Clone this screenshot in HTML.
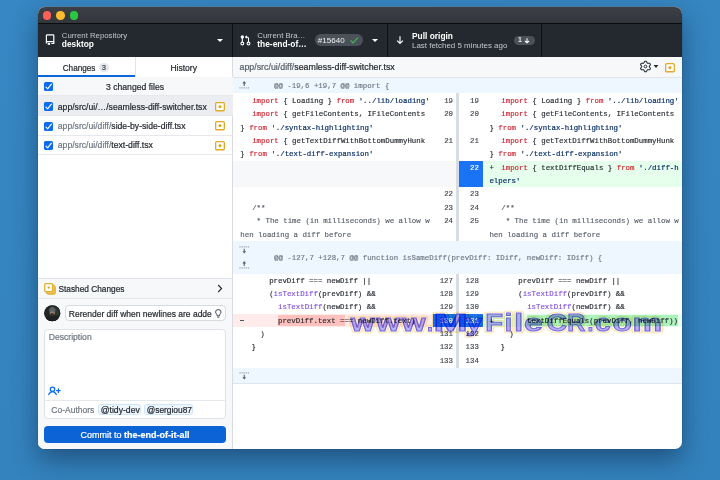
<!DOCTYPE html>
<html><head><meta charset="utf-8">
<style>
*{box-sizing:border-box;margin:0;padding:0}
html,body{width:720px;height:480px;overflow:hidden}
.win,.page{will-change:transform}
body{position:relative;background:linear-gradient(170deg,#3687c3 0%,#3584bf 55%,#3382bd 100%);font-family:"Liberation Sans",sans-serif}
.win{position:absolute;left:38px;top:7px;width:644px;height:442px;border-radius:7px;overflow:hidden;background:#fff;box-shadow:0 11px 26px rgba(10,30,60,.47),0 0 0 0.5px rgba(0,0,0,.15),0 -0.8px 0 rgba(150,158,168,.55)}
.a{position:absolute}
.title{position:absolute;left:0;top:0;width:644px;height:17px;background:linear-gradient(#3c3f45,#33363b);border-bottom:1px solid #0b0c0e}
.tl{position:absolute;top:4.1px;width:8.6px;height:8.6px;border-radius:50%}
.toolbar{position:absolute;left:0;top:17px;width:644px;height:33px;background:#24292f}
.div{position:absolute;top:17px;width:1px;height:33px;background:#0d0f12}
.t1{position:absolute;color:#c3c7cc;font-size:7.8px;white-space:nowrap}
.t2{position:absolute;color:#fff;font-weight:bold;font-size:8.4px;white-space:nowrap}
.caret{position:absolute;width:0;height:0;border-left:3px solid transparent;border-right:3px solid transparent;border-top:3.2px solid #fff}
.s{font-family:"Liberation Sans",sans-serif;white-space:nowrap;position:absolute;color:#24292f;-webkit-text-stroke:0.2px currentColor}
.ln{position:absolute;font-family:"Liberation Mono",monospace;font-size:7.4px;line-height:13.38px;white-space:pre;color:#24292f;padding-top:1.8px;-webkit-text-stroke:0.15px currentColor}
.num{position:absolute;width:40px;text-align:right;font-family:"Liberation Mono",monospace;font-size:7.4px;line-height:13.38px;color:#3f464e;padding-top:1.8px;-webkit-text-stroke:0.15px currentColor}
.num.w{color:#fff}
.bg{position:absolute}
.k{color:#cf222e}.f{color:#8250df}.c{color:#57606a}
.ln .s{position:static;font-family:inherit;color:#0a3069}
.ic{position:absolute;overflow:visible}
.frow{position:absolute;left:0;width:195px;border-bottom:1px solid #e6e8eb}
</style></head><body>
<div class="win">
  <div class="title">
    <div class="tl" style="left:4.9px;background:#fe5f57"></div>
    <div class="tl" style="left:18.3px;background:#febc2e"></div>
    <div class="tl" style="left:31.8px;background:#28c840"></div>
  </div>
  <div class="a" style="left:0;top:0;width:644px;height:442px">
  <div class="toolbar"></div>
  <div class="div" style="left:194.3px"></div>
  <div class="div" style="left:349px"></div>
  <div class="div" style="left:503.3px"></div>
  <!-- repo -->
  <svg class="ic" style="left:6px;top:26px" width="12" height="13" viewBox="0 0 12 13"><path d="M2.4 10.5V2.6Q2.4 1.8 3.2 1.8H9Q9.8 1.8 9.8 2.6V10.5H7.4 M2.4 8.7H9.8" stroke="#fff" stroke-width="1.2" fill="none"/><rect x="3.7" y="9.9" width="2.4" height="1.9" fill="#fff"/></svg>
  <div class="t1" style="left:23.8px;top:23.7px">Current Repository</div>
  <div class="t2" style="left:23.8px;top:32.1px">desktop</div>
  <div class="caret" style="left:179px;top:31.5px"></div>
  <!-- branch -->
  <svg class="ic" style="left:201px;top:27px" width="12" height="12" viewBox="0 0 12 12"><g stroke="#fff" stroke-width="1.1" fill="none"><circle cx="3.3" cy="9.5" r="1.4"/><circle cx="9.5" cy="9.5" r="1.4"/><circle cx="3.3" cy="3" r="1.1" fill="#fff"/><path d="M3.3 4V8.1 M9.5 8.1V4.6Q9.5 3 7.9 3H6.6 M7.8 1.8L6.6 3L7.8 4.2"/></g></svg>
  <div class="t1" style="left:219.3px;top:23.7px">Current Bra…</div>
  <div class="t2" style="left:219.3px;top:31.700000000000003px">the-end-of…</div>
  <div class="a" style="left:276.9px;top:26.75px;width:47.9px;height:12.25px;border-radius:6.1px;background:#4a5159"></div>
  <div class="t1" style="left:279.8px;top:28.6px;color:#eef0f2;font-size:8.06px">#15640</div>
  <svg class="ic" style="left:311.5px;top:30px" width="9" height="7" viewBox="0 0 9 7"><path d="M0.6 3.4L3 5.9L8 0.6" stroke="#3fb950" stroke-width="1.2" fill="none"/></svg>
  <div class="caret" style="left:334px;top:31.5px"></div>
  <!-- pull -->
  <svg class="ic" style="left:357.5px;top:29.2px" width="8" height="9" viewBox="0 0 8 9"><path d="M4 0.3V7.4 M1.1 4.6L4 7.5L6.9 4.6" stroke="#fff" stroke-width="1.15" fill="none"/></svg>
  <div class="t2" style="left:374px;top:24.3px">Pull origin</div>
  <div class="t1" style="left:374px;top:34.4px;font-size:7.95px">Last fetched 5 minutes ago</div>
  <div class="a" style="left:476.2px;top:28.8px;width:20.5px;height:8.9px;border-radius:4.45px;background:#4a5159"></div>
  <div class="t1" style="left:480px;top:29.3px;color:#e6e8ea;font-size:7px;font-weight:bold">1</div>
  <svg class="ic" style="left:486px;top:30.8px" width="6" height="7" viewBox="0 0 6 7"><path d="M3 0.3V4.7 M1 3L3 4.9L5 3" stroke="#fff" stroke-width="1.05" fill="none"/></svg>

  <!-- sidebar -->
  <div class="a" style="left:0;top:50px;width:195px;height:392px;background:#fff;border-right:1px solid #d8dce0"></div>
  <div class="a" style="left:96.5px;top:50px;width:1px;height:20px;background:#e1e4e8"></div>
  <div class="a" style="left:0;top:70px;width:194px;height:1px;background:#e1e4e8"></div>
  <div class="a" style="left:0;top:68px;width:97px;height:2px;background:#0b66d8"></div>
  <div class="s" style="left:24.7px;top:57.1px;font-size:8.2px">Changes</div>
  <div class="a" style="left:61.3px;top:56.3px;width:10px;height:8.5px;border-radius:4.25px;background:#e5e8eb"></div>
  <div class="s" style="left:64px;top:57.2px;font-size:7px;color:#3c434b">3</div>
  <div class="s" style="left:132.4px;top:55.8px;font-size:8.55px">History</div>
  <div class="frow" style="top:70px;height:19px;background:#f6f8fa"></div>
  <div class="frow" style="top:89px;height:20px;background:#ebedf0"></div>
  <div class="frow" style="top:109px;height:19.5px"></div>
  <div class="frow" style="top:128.5px;height:19.5px"></div>
  <svg class="ic" style="left:6px;top:75.2px" width="9" height="9" viewBox="0 0 9 9"><rect x="0" y="0" width="9" height="9" rx="1.6" fill="#0b6cf2"/><path d="M2 5.2L3.6 6.8L7.4 2.2" stroke="#fff" stroke-width="1.15" fill="none" stroke-linecap="round" stroke-linejoin="round"/></svg><svg class="ic" style="left:6px;top:95px" width="9" height="9" viewBox="0 0 9 9"><rect x="0" y="0" width="9" height="9" rx="1.6" fill="#0b6cf2"/><path d="M2 5.2L3.6 6.8L7.4 2.2" stroke="#fff" stroke-width="1.15" fill="none" stroke-linecap="round" stroke-linejoin="round"/></svg><svg class="ic" style="left:6px;top:114.7px" width="9" height="9" viewBox="0 0 9 9"><rect x="0" y="0" width="9" height="9" rx="1.6" fill="#0b6cf2"/><path d="M2 5.2L3.6 6.8L7.4 2.2" stroke="#fff" stroke-width="1.15" fill="none" stroke-linecap="round" stroke-linejoin="round"/></svg><svg class="ic" style="left:6px;top:134.1px" width="9" height="9" viewBox="0 0 9 9"><rect x="0" y="0" width="9" height="9" rx="1.6" fill="#0b6cf2"/><path d="M2 5.2L3.6 6.8L7.4 2.2" stroke="#fff" stroke-width="1.15" fill="none" stroke-linecap="round" stroke-linejoin="round"/></svg>
  <div class="s" style="left:68px;top:75.1px;font-size:8.65px">3 changed files</div>
  <div class="s" style="left:19.8px;top:95.0px;font-size:8.63px;color:#24292f">app/src/ui/…/seamless-diff-switcher.tsx</div>
  <div class="s" style="left:19.8px;top:114.3px;font-size:8.63px;color:#24292f"><span style="color:#6e7781">app/src/ui/diff/</span>side-by-side-diff.tsx</div>
  <div class="s" style="left:19.8px;top:132.5px;font-size:8.63px;color:#24292f"><span style="color:#6e7781">app/src/ui/diff/</span>text-diff.tsx</div>
  <svg class="ic" style="left:177px;top:95.0px" width="10" height="9.4" viewBox="0 0 10 9.4"><rect x="0.65" y="0.65" width="8.7" height="8.1" rx="1.1" fill="#fff" stroke="#e0ab28" stroke-width="1.3"/><circle cx="5" cy="4.7" r="1.45" fill="#dca20e"/></svg><svg class="ic" style="left:177px;top:114.3px" width="10" height="9.4" viewBox="0 0 10 9.4"><rect x="0.65" y="0.65" width="8.7" height="8.1" rx="1.1" fill="#fff" stroke="#e0ab28" stroke-width="1.3"/><circle cx="5" cy="4.7" r="1.45" fill="#dca20e"/></svg><svg class="ic" style="left:177px;top:133.7px" width="10" height="9.4" viewBox="0 0 10 9.4"><rect x="0.65" y="0.65" width="8.7" height="8.1" rx="1.1" fill="#fff" stroke="#e0ab28" stroke-width="1.3"/><circle cx="5" cy="4.7" r="1.45" fill="#dca20e"/></svg>

  <!-- stash + commit -->
  <div class="a" style="left:0;top:270.9px;width:195px;height:171.1px;background:#f6f8fa;border-top:1px solid #e1e4e8;border-right:1px solid #d8dce0"></div>
  <div class="a" style="left:0;top:291px;width:194px;height:1px;background:#e6e8eb"></div>
  <svg class="ic" style="left:5.8px;top:275.5px" width="12" height="12" viewBox="0 0 12 12"><rect x="3" y="3" width="8.3" height="8.2" rx="1.2" fill="#efcf70" stroke="#e0ad2a" stroke-width="1"/><rect x="1.9" y="1.9" width="8.3" height="8.2" rx="1.2" fill="#f3dc92" stroke="#e0ad2a" stroke-width="1"/><rect x="0.7" y="0.7" width="7.9" height="7.8" rx="1.1" fill="#fff" stroke="#e0ad2a" stroke-width="1.25"/><circle cx="4.65" cy="4.6" r="1.15" fill="#d9a21c"/></svg>
  <div class="s" style="left:20.5px;top:277.0px;font-size:8.3px">Stashed Changes</div>
  <svg class="ic" style="left:179px;top:277px" width="6" height="9" viewBox="0 0 6 9"><path d="M1.2 1L4.6 4.5L1.2 8" stroke="#24292f" stroke-width="1.1" fill="none"/></svg>
  <svg class="ic" style="left:6.3px;top:298px" width="16.5" height="16.5" viewBox="0 0 16.5 16.5"><defs><clipPath id="av"><circle cx="8.25" cy="8.25" r="8.1"/></clipPath></defs><g clip-path="url(#av)"><rect width="16.5" height="16.5" fill="#222824"/><rect x="11" y="0" width="5.5" height="10" fill="#2c352e"/><ellipse cx="8.5" cy="16" rx="7.5" ry="5.5" fill="#1f2124"/><ellipse cx="8.3" cy="8.2" rx="2.6" ry="2.4" fill="#9a7f70"/><ellipse cx="8.3" cy="9.6" rx="2.2" ry="1.5" fill="#3a302c"/><path d="M4.9 6.6Q4.9 2 8.3 2Q11.7 2 11.7 6.6Z" fill="#5d6268"/><circle cx="8.25" cy="8.25" r="7.9" fill="none" stroke="#111" stroke-width=".6"/></g></svg>
  <div class="a" style="left:26.7px;top:298.3px;width:161px;height:16px;border-radius:4px;background:#fff;border:1px solid #d6dbe0"></div>
  <div class="s" style="left:30.8px;top:302.0px;font-size:8.5px">Rerender diff when newlines are adde</div>
  <svg class="ic" style="left:176.5px;top:302px" width="7" height="10" viewBox="0 0 7 10"><path d="M2.1 6.8Q2.1 5.6 1.3 4.7Q0.6 3.9 0.6 2.9Q0.6 0.6 3.3 0.6Q6 0.6 6 2.9Q6 3.9 5.3 4.7Q4.5 5.6 4.5 6.8Z M2.3 8.2H4.3" stroke="#3c434b" stroke-width="1" fill="none"/></svg>
  <div class="a" style="left:6.4px;top:322.1px;width:181.3px;height:90.4px;border-radius:4px;background:#fff;border:1px solid #dfe3e7"></div>
  <div class="a" style="left:7px;top:392.5px;width:180px;height:1px;background:#e6e9ec"></div>
  <div class="s" style="left:10.7px;top:325.4px;font-size:8.6px;color:#6e7781">Description</div>
  <svg class="ic" style="left:9px;top:379px" width="14" height="10" viewBox="0 0 14 10"><g stroke="#0b6cf2" stroke-width="1.25" fill="none" stroke-linecap="round"><circle cx="5.5" cy="3.2" r="2.2"/><path d="M1.7 8.6Q3 5.6 5.5 5.6Q8 5.6 9.3 8.6 M9.6 4.6H13.2 M11.4 2.8V6.4"/></g></svg>
  <div class="s" style="left:13.3px;top:397.5px;font-size:8.5px;color:#6e7781">Co-Authors</div>
  <div class="a" style="left:60.4px;top:397.3px;width:42.9px;height:11.1px;border-radius:3px;background:#eef7ff;border:1px solid #cfe4f7"></div>
  <div class="s" style="left:62.7px;top:397.5px;font-size:8.68px">@tidy-dev</div>
  <div class="a" style="left:106.4px;top:397.3px;width:48.9px;height:11.1px;border-radius:3px;background:#eef7ff;border:1px solid #cfe4f7"></div>
  <div class="s" style="left:108.7px;top:397.5px;font-size:8.38px">@sergiou87</div>
  <div class="a" style="left:6.2px;top:419.1px;width:181.5px;height:16.7px;border-radius:4px;background:#0b63d6"></div>
  <div class="s" style="left:42.6px;top:422.6px;font-size:8.99px;color:#fff">Commit to <b>the-end-of-it-all</b></div>

  <!-- diff area header -->
  <div class="a" style="left:195px;top:50px;width:449px;height:20.5px;background:#f6f8fa;border-bottom:1px solid #e1e4e8"></div>
  <div class="s" style="left:201.5px;top:55.3px;font-size:8.83px;color:#57606a">app/src/ui/diff/<span style="color:#24292f">seamless-diff-switcher.tsx</span></div>
  <svg class="ic" style="left:602.3px;top:54.4px" width="11" height="11" viewBox="0 0 11 11"><path d="M3.63 2.25 L4.76 0.20 L6.24 0.20 L7.38 2.25 L9.72 2.21 L10.46 3.50 L9.25 5.50 L10.46 7.50 L9.72 8.79 L7.38 8.75 L6.24 10.80 L4.76 10.80 L3.63 8.75 L1.28 8.79 L0.54 7.50 L1.75 5.50 L0.54 3.50 L1.28 2.21Z" stroke="#24292f" stroke-width="1.05" stroke-linejoin="round" fill="none"/><circle cx="5.5" cy="5.5" r="1.35" stroke="#24292f" stroke-width="1" fill="none"/></svg>
  <div class="caret" style="left:615.6px;top:58.3px;border-left-width:2.7px;border-right-width:2.7px;border-top:3.3px solid #24292f;transform:scaleX(1.2)"></div>
  <svg class="ic" style="left:627.3px;top:55.9px" width="10" height="9.4" viewBox="0 0 10 9.4"><rect x="0.65" y="0.65" width="8.7" height="8.1" rx="1.1" fill="#fff" stroke="#e0ab28" stroke-width="1.3"/><circle cx="5" cy="4.7" r="1.45" fill="#dca20e"/></svg>
</div></div>
<div class="a page" style="left:0;top:0;width:720px;height:480px">
  <div class="bg" style="left:233px;top:78px;width:449px;height:15.3px;background:#eef6ff"></div>
  <div class="bg" style="left:233px;top:241px;width:449px;height:32.8px;background:#eef6ff"></div>
  <div class="bg" style="left:233px;top:367.6px;width:449px;height:16.2px;background:#eef6ff;border-bottom:1px solid #dde6ef"></div>
  <div class="ln" style="left:274px;top:78.3px;color:#6e7781">@@ -19,6 +19,7 @@ import {</div>
  <div class="ln" style="left:274px;top:250.5px;color:#6e7781">@@ -127,7 +128,7 @@ function isSameDiff(prevDiff: IDiff, newDiff: IDiff) {</div>
  <svg class="ic" style="left:239.0px;top:80px" width="11" height="10" viewBox="0 0 11 10"><path d="M3.4 3.4H7.1L5.25 1.1Z" fill="#57606a"/><path d="M5.25 2.6V6.1" stroke="#57606a" stroke-width="1.1"/><path d="M0.4 7.9H10.4" stroke="#8c959f" stroke-width="1" stroke-dasharray="1.25 0.85"/></svg><svg class="ic" style="left:239.0px;top:245px" width="11" height="10" viewBox="0 0 11 10"><path d="M0.4 1.9H10.4" stroke="#8c959f" stroke-width="1" stroke-dasharray="1.25 0.85"/><path d="M5.25 3.7V7" stroke="#57606a" stroke-width="1.1"/><path d="M3.4 6.2H7.1L5.25 8.6Z" fill="#57606a"/></svg><svg class="ic" style="left:239.0px;top:260.1px" width="11" height="10" viewBox="0 0 11 10"><path d="M3.4 3.4H7.1L5.25 1.1Z" fill="#57606a"/><path d="M5.25 2.6V6.1" stroke="#57606a" stroke-width="1.1"/><path d="M0.4 7.9H10.4" stroke="#8c959f" stroke-width="1" stroke-dasharray="1.25 0.85"/></svg><svg class="ic" style="left:239.0px;top:371.3px" width="11" height="10" viewBox="0 0 11 10"><path d="M0.4 1.9H10.4" stroke="#8c959f" stroke-width="1" stroke-dasharray="1.25 0.85"/><path d="M5.25 3.7V7" stroke="#57606a" stroke-width="1.1"/><path d="M3.4 6.2H7.1L5.25 8.6Z" fill="#57606a"/></svg>
  <div class="ln" style="left:252.20px;top:93.00px"><span class="k">import</span> { Loading } <span class="k">from</span> <span class="s">&#x27;../lib/loading&#x27;</span></div>
<div class="ln" style="left:501.30px;top:93.00px"><span class="k">import</span> { Loading } <span class="k">from</span> <span class="s">&#x27;../lib/loading&#x27;</span></div>
<div class="num" style="left:413.00px;top:93.00px">19</div>
<div class="num" style="left:438.90px;top:93.00px">19</div>
<div class="ln" style="left:252.20px;top:106.38px"><span class="k">import</span> { getFileContents, IFileContents</div>
<div class="ln" style="left:501.30px;top:106.38px"><span class="k">import</span> { getFileContents, IFileContents</div>
<div class="ln" style="left:240.30px;top:119.76px">} <span class="k">from</span> <span class="s">&#x27;./syntax-highlighting&#x27;</span></div>
<div class="ln" style="left:489.40px;top:119.76px">} <span class="k">from</span> <span class="s">&#x27;./syntax-highlighting&#x27;</span></div>
<div class="num" style="left:413.00px;top:106.38px">20</div>
<div class="num" style="left:438.90px;top:106.38px">20</div>
<div class="ln" style="left:252.20px;top:133.14px"><span class="k">import</span> { getTextDiffWithBottomDummyHunk</div>
<div class="ln" style="left:501.30px;top:133.14px"><span class="k">import</span> { getTextDiffWithBottomDummyHunk</div>
<div class="ln" style="left:240.30px;top:146.52px">} <span class="k">from</span> <span class="s">&#x27;./text-diff-expansion&#x27;</span></div>
<div class="ln" style="left:489.40px;top:146.52px">} <span class="k">from</span> <span class="s">&#x27;./text-diff-expansion&#x27;</span></div>
<div class="num" style="left:413.00px;top:133.14px">21</div>
<div class="num" style="left:438.90px;top:133.14px">21</div>
<div class="bg" style="left:233.00px;top:160.70px;width:223.40px;height:26.76px;background:#f6f8fa"></div>
<div class="bg" style="left:458.00px;top:160.70px;width:24.80px;height:26.76px;background:#1a73f5"></div>
<div class="bg" style="left:482.70px;top:160.70px;width:199.30px;height:26.76px;background:#e6ffec"></div>
<div class="ln" style="left:489.40px;top:160.70px">+</div>
<div class="ln" style="left:501.30px;top:159.90px"><span class="k">import</span> { textDiffEquals } <span class="k">from</span> <span class="s">&#x27;./diff-h</span></div>
<div class="ln" style="left:489.40px;top:173.28px"><span class="s">elpers&#x27;</span></div>
<div class="num w" style="left:438.90px;top:159.90px">22</div>
<div class="ln" style="left:252.20px;top:186.66px"></div>
<div class="ln" style="left:501.30px;top:186.66px"></div>
<div class="num" style="left:413.00px;top:186.66px">22</div>
<div class="num" style="left:438.90px;top:186.66px">23</div>
<div class="ln" style="left:252.20px;top:200.04px"><span class="c">/**</span></div>
<div class="ln" style="left:501.30px;top:200.04px"><span class="c">/**</span></div>
<div class="num" style="left:413.00px;top:200.04px">23</div>
<div class="num" style="left:438.90px;top:200.04px">24</div>
<div class="ln" style="left:252.20px;top:213.42px"><span class="c"> * The time (in milliseconds) we allow w</span></div>
<div class="ln" style="left:501.30px;top:213.42px"><span class="c"> * The time (in milliseconds) we allow w</span></div>
<div class="ln" style="left:240.30px;top:226.80px"><span class="c">hen loading a diff before</span></div>
<div class="ln" style="left:489.40px;top:226.80px"><span class="c">hen loading a diff before</span></div>
<div class="num" style="left:413.00px;top:213.42px">24</div>
<div class="num" style="left:438.90px;top:213.42px">25</div>
<div class="ln" style="left:251.40px;top:272.80px">    prevDiff === newDiff ||</div>
<div class="ln" style="left:500.50px;top:272.80px">    prevDiff === newDiff ||</div>
<div class="num" style="left:413.00px;top:272.80px">127</div>
<div class="num" style="left:438.90px;top:272.80px">128</div>
<div class="ln" style="left:251.40px;top:286.18px">    (<span class="f">isTextDiff</span>(prevDiff) &amp;&amp;</div>
<div class="ln" style="left:500.50px;top:286.18px">    (<span class="f">isTextDiff</span>(prevDiff) &amp;&amp;</div>
<div class="num" style="left:413.00px;top:286.18px">128</div>
<div class="num" style="left:438.90px;top:286.18px">129</div>
<div class="ln" style="left:251.40px;top:299.56px">      <span class="f">isTextDiff</span>(newDiff) &amp;&amp;</div>
<div class="ln" style="left:500.50px;top:299.56px">      <span class="f">isTextDiff</span>(newDiff) &amp;&amp;</div>
<div class="num" style="left:413.00px;top:299.56px">129</div>
<div class="num" style="left:438.90px;top:299.56px">130</div>
<div class="bg" style="left:233.00px;top:313.94px;width:200.00px;height:13.38px;background:#ffebe9"></div>
<div class="bg" style="left:433.10px;top:313.94px;width:23.40px;height:13.38px;background:#1a73f5"></div>
<div class="bg" style="left:458.00px;top:313.94px;width:24.80px;height:13.38px;background:#1a73f5"></div>
<div class="bg" style="left:482.70px;top:313.94px;width:199.30px;height:13.38px;background:#e6ffec"></div>
<div class="bg" style="left:240.30px;top:319.64px;width:3.80px;height:0.90px;background:#4a525b"></div>
<div class="ln" style="left:489.40px;top:313.94px">+</div>
<div class="bg" style="left:277.54px;top:315.14px;width:67.60px;height:10.98px;background:#ffc1bd"></div>
<div class="ln" style="left:251.40px;top:312.94px">      prevDiff.text === newDiff.text)</div>
<div class="bg" style="left:526.64px;top:315.14px;width:151.46px;height:10.98px;background:#abf2bc"></div>
<div class="ln" style="left:500.50px;top:312.94px">      textDiffEquals(prevDiff, newDiff))</div>
<div class="num w" style="left:413.00px;top:312.94px">130</div>
<div class="num w" style="left:438.90px;top:312.94px">131</div>
<div class="ln" style="left:251.40px;top:326.32px">  )</div>
<div class="ln" style="left:500.50px;top:326.32px">  )</div>
<div class="num" style="left:413.00px;top:326.32px">131</div>
<div class="num" style="left:438.90px;top:326.32px">132</div>
<div class="ln" style="left:251.40px;top:339.70px">}</div>
<div class="ln" style="left:500.50px;top:339.70px">}</div>
<div class="num" style="left:413.00px;top:339.70px">132</div>
<div class="num" style="left:438.90px;top:339.70px">133</div>
<div class="ln" style="left:251.40px;top:353.08px"></div>
<div class="ln" style="left:500.50px;top:353.08px"></div>
<div class="num" style="left:413.00px;top:353.08px">133</div>
<div class="num" style="left:438.90px;top:353.08px">134</div>
  <div class="bg" style="left:456.4px;top:93.3px;width:2.4px;height:147.8px;background:#d8dde3"></div>
  <div class="bg" style="left:456.4px;top:273.8px;width:2.4px;height:93.8px;background:#d8dde3"></div>
  <svg class="ic" style="left:0;top:0;mix-blend-mode:multiply" width="720" height="480" viewBox="0 0 720 480"><g font-family="Liberation Sans" font-weight="bold" font-size="23.5"><g fill="none" stroke="#fbe6b0" stroke-width="4.6" stroke-linejoin="round"><text transform="translate(362.50,331) scale(1.293,1)" x="-9.10" y="0">w</text><text transform="translate(388.15,331) scale(1.299,1)" x="-9.10" y="0">w</text><text transform="translate(413.80,331) scale(1.293,1)" x="-9.10" y="0">w</text><text transform="translate(430.05,331) scale(0.939,1)" x="-3.25" y="0">.</text><text transform="translate(450.55,331) scale(1.750,1)" x="-9.80" y="0">M</text><text transform="translate(474.00,331) scale(1.276,1)" x="-6.55" y="0">y</text><text transform="translate(494.60,331) scale(1.244,1)" x="-7.55" y="0">F</text><text transform="translate(508.48,331) scale(1.136,1)" x="-3.25" y="0">i</text><text transform="translate(518.55,331) scale(1.364,1)" x="-3.25" y="0">l</text><text transform="translate(533.45,331) scale(1.430,1)" x="-6.60" y="0">e</text><text transform="translate(556.85,331) scale(1.209,1)" x="-8.65" y="0">C</text><text transform="translate(576.90,331) scale(1.074,1)" x="-9.05" y="0">R</text><text transform="translate(590.40,331) scale(0.909,1)" x="-3.25" y="0">.</text><text transform="translate(602.85,331) scale(1.226,1)" x="-6.65" y="0">c</text><text transform="translate(622.30,331) scale(1.360,1)" x="-7.15" y="0">o</text><text transform="translate(647.27,331) scale(1.419,1)" x="-10.50" y="0">m</text></g><g fill="none" stroke="#ffffff" stroke-width="2.4" stroke-linejoin="round"><text transform="translate(362.50,331) scale(1.293,1)" x="-9.10" y="0">w</text><text transform="translate(388.15,331) scale(1.299,1)" x="-9.10" y="0">w</text><text transform="translate(413.80,331) scale(1.293,1)" x="-9.10" y="0">w</text><text transform="translate(430.05,331) scale(0.939,1)" x="-3.25" y="0">.</text><text transform="translate(450.55,331) scale(1.750,1)" x="-9.80" y="0">M</text><text transform="translate(474.00,331) scale(1.276,1)" x="-6.55" y="0">y</text><text transform="translate(494.60,331) scale(1.244,1)" x="-7.55" y="0">F</text><text transform="translate(508.48,331) scale(1.136,1)" x="-3.25" y="0">i</text><text transform="translate(518.55,331) scale(1.364,1)" x="-3.25" y="0">l</text><text transform="translate(533.45,331) scale(1.430,1)" x="-6.60" y="0">e</text><text transform="translate(556.85,331) scale(1.209,1)" x="-8.65" y="0">C</text><text transform="translate(576.90,331) scale(1.074,1)" x="-9.05" y="0">R</text><text transform="translate(590.40,331) scale(0.909,1)" x="-3.25" y="0">.</text><text transform="translate(602.85,331) scale(1.226,1)" x="-6.65" y="0">c</text><text transform="translate(622.30,331) scale(1.360,1)" x="-7.15" y="0">o</text><text transform="translate(647.27,331) scale(1.419,1)" x="-10.50" y="0">m</text></g><g fill="#b8aff4" stroke="#7566d8" stroke-width="1"><text transform="translate(362.50,331) scale(1.293,1)" x="-9.10" y="0">w</text><text transform="translate(388.15,331) scale(1.299,1)" x="-9.10" y="0">w</text><text transform="translate(413.80,331) scale(1.293,1)" x="-9.10" y="0">w</text><text transform="translate(430.05,331) scale(0.939,1)" x="-3.25" y="0">.</text><text transform="translate(450.55,331) scale(1.750,1)" x="-9.80" y="0">M</text><text transform="translate(474.00,331) scale(1.276,1)" x="-6.55" y="0">y</text><text transform="translate(494.60,331) scale(1.244,1)" x="-7.55" y="0">F</text><text transform="translate(508.48,331) scale(1.136,1)" x="-3.25" y="0">i</text><text transform="translate(518.55,331) scale(1.364,1)" x="-3.25" y="0">l</text><text transform="translate(533.45,331) scale(1.430,1)" x="-6.60" y="0">e</text><text transform="translate(556.85,331) scale(1.209,1)" x="-8.65" y="0">C</text><text transform="translate(576.90,331) scale(1.074,1)" x="-9.05" y="0">R</text><text transform="translate(590.40,331) scale(0.909,1)" x="-3.25" y="0">.</text><text transform="translate(602.85,331) scale(1.226,1)" x="-6.65" y="0">c</text><text transform="translate(622.30,331) scale(1.360,1)" x="-7.15" y="0">o</text><text transform="translate(647.27,331) scale(1.419,1)" x="-10.50" y="0">m</text></g></g></svg>
</div>
</body></html>
